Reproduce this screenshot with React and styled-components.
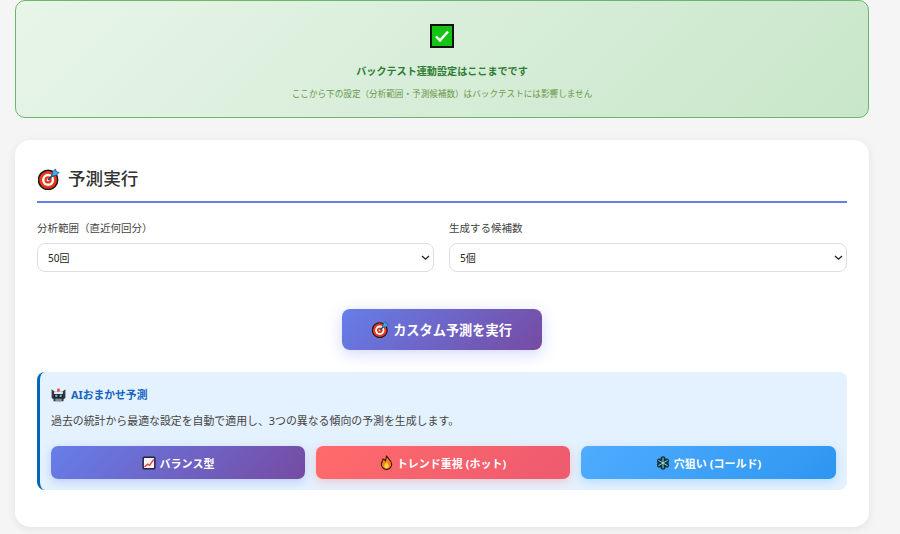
import React from "react";
import styled, { createGlobalStyle } from "styled-components";

const FONT = `"Noto Sans", "Noto Sans CJK JP", sans-serif`;
const Global = createGlobalStyle`
  html, body { margin: 0; padding: 0; background: #f5f5f5; height: 534px; overflow: hidden; }
  body { font-family: ${FONT}; color: #333; }
  * { box-sizing: border-box; }
`;
const Page = styled.div`
  width: 900px; padding: 0 31px 0 15px; display: flex; flex-direction: column; gap: 22px;
`;
const Banner = styled.section`
  height: 118px; border: 1.5px solid #6cb56f; border-radius: 10px;
  background: linear-gradient(135deg, #e8f5e9 0%, #c8e6c9 100%);
  display: flex; flex-direction: column; align-items: center; padding-top: 23px;
`;
const BannerTitle = styled.div`margin-top: 14px; font-size: 10.1px; line-height: 18px; font-weight: 700; color: #2e7d32;`;
const BannerNote = styled.div`margin-top: 7px; font-size: 8.6px; line-height: 14px; color: #558b2f; opacity: .85;`;
const Card = styled.section`
  height: 387px; background: #fff; border-radius: 15px; padding: 22px;
  box-shadow: 0 2px 10px rgba(0,0,0,.08);
`;
const Heading = styled.h2`
  margin: 0; height: 41px; border-bottom: 2.5px solid #667eea; font-size: 17.6px; line-height: 33px;
  font-weight: 500; color: #333; display: flex; align-items: flex-start; gap: 8px; padding-left: 1px;
  svg { margin-top: 6px; }
`;
const Fields = styled.div`display: grid; grid-template-columns: 397px 398px; gap: 15px; margin-top: 17px;`;
const Field = styled.label`display: flex; flex-direction: column; gap: 6px;`;
const FieldLabel = styled.span`font-size: 10.5px; line-height: 17px; color: #444;`;
const chevron = encodeURIComponent(`<svg xmlns="http://www.w3.org/2000/svg" width="9" height="6" viewBox="0 0 9 6"><path d="M1 1l3.5 3.2L8 1" fill="none" stroke="#222" stroke-width="1.3"/></svg>`);
const Select = styled.select`
  height: 29px; border: 1px solid #ddd; border-radius: 8px; padding: 0 10px; appearance: none;
  background: #fff url("data:image/svg+xml,${chevron}") no-repeat right 3px center;
  font: 10px ${FONT}; color: #222;
`;
const RunRow = styled.div`display: flex; justify-content: center; margin-top: 37px;`;
const buttonBase = `
  border: 0; color: #fff; display: flex; align-items: center; justify-content: center;
  font-family: ${FONT}; font-weight: 700; padding: 0;
`;
const RunButton = styled.button`
  ${buttonBase}
  width: 200px; height: 41px; border-radius: 8px; font-size: 13.2px; gap: 4px;
  background: linear-gradient(135deg, #667eea, #764ba2);
  box-shadow: 0 4px 15px rgba(102,126,234,.3);
`;
const AiBox = styled.div`
  margin-top: 22px; height: 118px; padding: 14px 11px 0 11px; background: #e4f1fe;
  border-left: 3px solid #0066b8; border-radius: 8px;
`;
const AiTitle = styled.div`
  font-size: 10.8px; line-height: 18px; font-weight: 700; color: #1565c0;
  display: flex; align-items: center; gap: 5px;
`;
const AiText = styled.p`margin: 8px 0 0; font-size: 10.9px; line-height: 18px; color: #444;`;
const Presets = styled.div`display: grid; grid-template-columns: 254px 254px 255px; gap: 11px; margin-top: 16px;`;
const Preset = styled.button`
  ${buttonBase}
  height: 33px; border-radius: 7px; font-size: 11px; gap: 4px;
  background: ${p => p.$bg};
  box-shadow: 0 3px 10px ${p => p.$shadow};
`;

const CheckIcon = () => (
  <svg width="24" height="24" viewBox="0 0 24 24">
    <rect x="1" y="1" width="22" height="22" fill="#14c414" stroke="#111" strokeWidth="2" />
    <path d="M6 12.5l4 4 8-9" fill="none" stroke="#fff" strokeWidth="2.4" />
  </svg>
);
const TargetIcon = ({ size }) => (
  <svg width={size} height={size} viewBox="0 0 24 24">
    <circle cx="11" cy="13" r="10.5" fill="#e8381c" stroke="#1a1a1a" strokeWidth="1.6" />
    <circle cx="11" cy="13" r="6.6" fill="#fff" />
    <circle cx="11" cy="13" r="4" fill="#e8381c" />
    <circle cx="11" cy="13" r="1.5" fill="#fff" />
    <path d="M11 13L19 5" stroke="#1a4a7a" strokeWidth="2" />
    <path d="M15 9l1-5 3-3 1 3 3 1-3 3z" fill="#3fa9f0" stroke="#1a4a7a" strokeWidth=".8" />
  </svg>
);
const RobotIcon = () => (
  <svg width="15" height="15" viewBox="0 0 24 24">
    <path d="M1 2l5 4h12l5-4v14l-3 2v3H4v-3l-3-2z" fill="#34383e" />
    <rect x="10" y="1" width="4" height="6" fill="#e0483a" />
    <rect x="5" y="6" width="14" height="4" fill="#e6e8ea" />
    <rect x="4.5" y="9.5" width="15" height="6" rx="1.5" fill="#1f2328" />
    <circle cx="8.5" cy="12.5" r="2" fill="#55b7ee" />
    <circle cx="15.5" cy="12.5" r="2" fill="#55b7ee" />
    <rect x="7" y="17" width="10" height="4" rx="1" fill="#8b9197" />
  </svg>
);
const ChartIcon = () => (
  <svg width="14" height="14" viewBox="0 0 24 24">
    <rect x="2" y="2" width="20" height="20" rx="2" fill="#f4f4f6" stroke="#24243a" strokeWidth="2.6" />
    <path d="M4 19l6-5 3 2 7-10" fill="none" stroke="#e5404a" strokeWidth="2.4" />
  </svg>
);
const FlameIcon = () => (
  <svg width="13" height="15" viewBox="0 0 22 26">
    <path d="M11 1c1 5 9 8 9 15a9 9 0 0 1-18 0c0-4 3-5 3-9 3 1 4 3 4 3s2-4 2-9z" fill="#f6821e" stroke="#2a1208" strokeWidth="1.8" />
    <path d="M11 12c1 3 4 4 4 7a4 4 0 0 1-8 0c0-3 3-4 4-7z" fill="#ffd23c" />
  </svg>
);
const SnowIcon = () => (
  <svg width="14" height="14" viewBox="0 0 24 24">
    <g fill="#17323c">
      <circle cx="12" cy="5" r="4.4" /><circle cx="12" cy="19" r="4.4" />
      <circle cx="6" cy="8.5" r="4.4" /><circle cx="18" cy="8.5" r="4.4" />
      <circle cx="6" cy="15.5" r="4.4" /><circle cx="18" cy="15.5" r="4.4" />
      <circle cx="12" cy="12" r="5" />
    </g>
    <g stroke="#7fd6e6" strokeWidth="1.8">
      <path d="M12 3v18M4.2 7.5l15.6 9M19.8 7.5l-15.6 9" />
    </g>
  </svg>
);

export default function App() {
  return (
    <>
      <Global />
      <Page>
        <Banner>
          <CheckIcon />
          <BannerTitle>バックテスト連動設定はここまでです</BannerTitle>
          <BannerNote>ここから下の設定（分析範囲・予測候補数）はバックテストには影響しません</BannerNote>
        </Banner>
        <Card>
          <Heading><TargetIcon size={22} /><span>予測実行</span></Heading>
          <Fields>
            <Field>
              <FieldLabel>分析範囲（直近何回分）</FieldLabel>
              <Select defaultValue="50"><option value="50">50回</option></Select>
            </Field>
            <Field>
              <FieldLabel>生成する候補数</FieldLabel>
              <Select defaultValue="5"><option value="5">5個</option></Select>
            </Field>
          </Fields>
          <RunRow><RunButton><TargetIcon size={17} /><span>カスタム予測を実行</span></RunButton></RunRow>
          <AiBox>
            <AiTitle><RobotIcon /><span>AIおまかせ予測</span></AiTitle>
            <AiText>過去の統計から最適な設定を自動で適用し、3つの異なる傾向の予測を生成します。</AiText>
            <Presets>
              <Preset $bg="linear-gradient(135deg,#667eea,#764ba2)" $shadow="rgba(102,126,234,.3)"><ChartIcon /><span>バランス型</span></Preset>
              <Preset $bg="linear-gradient(135deg,#ff6b6b,#ee5a6f)" $shadow="rgba(255,107,107,.3)"><FlameIcon /><span>トレンド重視 (ホット)</span></Preset>
              <Preset $bg="linear-gradient(135deg,#4facfe,#2e96f0)" $shadow="rgba(79,172,254,.3)"><SnowIcon /><span>穴狙い (コールド)</span></Preset>
            </Presets>
          </AiBox>
        </Card>
      </Page>
    </>
  );
}
